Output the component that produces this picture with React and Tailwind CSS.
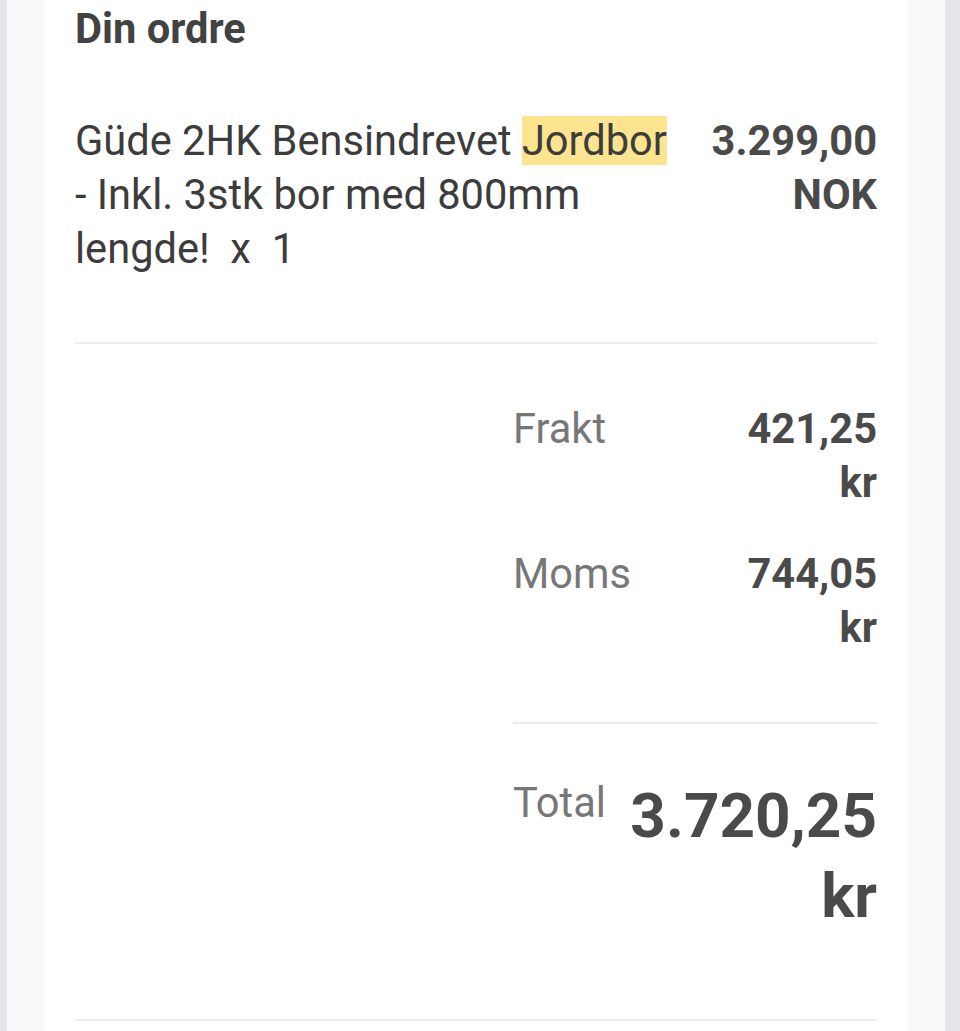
export default function App() {
    const rows = [
        { label: 'Frakt', value: '421,25 kr' },
        { label: 'Moms', value: '744,05 kr' },
    ];

    return (
        <div
            className="min-h-[1031px] bg-[#e4e4e9] flex"
            style={{ fontFamily: 'Roboto, "Noto Sans", sans-serif' }}
        >
            <div className="ml-[7px] mr-[15px] flex-1 bg-[#f9f9fb] px-[37px] flex">
                <div className="flex-1 bg-white px-[31px] pt-[2px] text-[41.6px] leading-[54px] text-[#3c3c3c]">
                    <h2 className="font-bold text-[#424242]">Din ordre</h2>

                    <div className="mt-[58px] flex gap-[28px]">
                        <div className="flex-1">
                            Güde 2HK Bensindrevet <mark className="bg-[#fde48f] text-[#3c3c3c]">Jordbor</mark> - Inkl. 3stk bor med 800mm lengde!&nbsp; x&nbsp; 1
                        </div>
                        <div className="w-min text-right font-bold text-[#4a4a4a]">3.299,00 NOK</div>
                    </div>

                    <div className="mt-[66px] h-[2px] bg-[#ebebeb]" />

                    <div className="ml-auto w-[364px]">
                        <div className="pt-[58px] flex flex-col gap-[37px]">
                            {rows.map((row) => (
                                <div key={row.label} className="flex justify-between">
                                    <span className="text-[#777777]">{row.label}</span>
                                    <span className="w-min text-right font-bold text-[#4a4a4a]">{row.value}</span>
                                </div>
                            ))}
                        </div>

                        <div className="mt-[67px] h-[2px] bg-[#ebebeb]" />

                        <div className="pt-[52px] flex justify-between items-start">
                            <span className="text-[#777777]">Total</span>
                            <span className="w-min text-right font-bold text-[62px] leading-[80px] text-[#4a4a4a]">3.720,25 kr</span>
                        </div>
                    </div>

                    <div className="mt-[83px] h-[2px] bg-[#ebebeb]" />
                    <div className="h-[40px]" />
                </div>
            </div>
        </div>
    );
}
